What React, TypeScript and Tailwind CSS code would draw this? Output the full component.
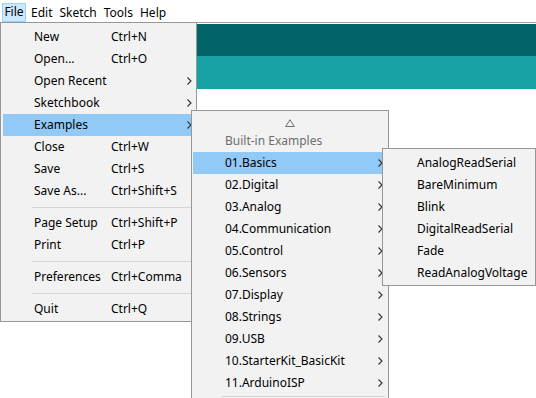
import React from 'react';

const fileItems: (string | [string, string?, boolean?])[] = [
  ['New', 'Ctrl+N'],
  ['Open...', 'Ctrl+O'],
  ['Open Recent', '', true],
  ['Sketchbook', '', true],
  ['Examples', '', true],
  ['Close', 'Ctrl+W'],
  ['Save', 'Ctrl+S'],
  ['Save As...', 'Ctrl+Shift+S'],
  '-',
  ['Page Setup', 'Ctrl+Shift+P'],
  ['Print', 'Ctrl+P'],
  '-',
  ['Preferences', 'Ctrl+Comma'],
  '-',
  ['Quit', 'Ctrl+Q'],
];

const examples = [
  '01.Basics',
  '02.Digital',
  '03.Analog',
  '04.Communication',
  '05.Control',
  '06.Sensors',
  '07.Display',
  '08.Strings',
  '09.USB',
  '10.StarterKit_BasicKit',
  '11.ArduinoISP',
];

const basics = ['AnalogReadSerial', 'BareMinimum', 'Blink', 'DigitalReadSerial', 'Fade', 'ReadAnalogVoltage'];

function Chevron() {
  return (
    <svg width="5" height="8" viewBox="0 0 5 8" className="shrink-0">
      <polyline points="0.5,0.5 4,4 0.5,7.5" fill="none" stroke="#333" strokeWidth="1.1" />
    </svg>
  );
}

export default function App() {
  return (
    <div
      className="relative w-[536px] h-[398px] bg-white overflow-hidden text-[12px] text-black"
      style={{ fontFamily: '"Noto Sans", "Open Sans", sans-serif' }}
    >
      {/* menu bar */}
      <div className="h-[23px] border-b border-[#a0a0a0] flex items-center pl-[2px]">
        <div className="h-[19px] mt-[2px] w-[24px] flex items-center justify-center bg-[#cce8ff] border border-[#99d1ff]">File</div>
        <div className="ml-[5px] mt-[2px] flex gap-[7px] leading-[19px]">
          <span>Edit</span>
          <span>Sketch</span>
          <span>Tools</span>
          <span>Help</span>
        </div>
      </div>
      <div className="h-px" />
      <div className="h-[32px] bg-[#006468]" />
      <div className="h-[33px] bg-[#17a1a5]" />

      {/* File menu */}
      <div className="absolute left-0 top-[22px] w-[197px] h-[300px] bg-[#f2f2f2] border border-[#979797] pt-[3px] px-[2px] flex flex-col">
        {fileItems.map((it, i) =>
          it === '-' ? (
            <div key={i} className="h-[10px] flex items-center pl-[29px] pr-[1px]">
              <div className="h-px w-full bg-[#d5d5d5]" />
            </div>
          ) : (
            <div
              key={i}
              className={`h-[22px] shrink-0 flex items-center pl-[31px] pr-[2px] ${it[0] === 'Examples' ? 'bg-[#91c9f7]' : ''}`}
            >
              <span className="w-[77px]">{it[0]}</span>
              <span className="flex-1">{it[1]}</span>
              {it[2] && <Chevron />}
            </div>
          )
        )}
      </div>

      {/* Examples submenu */}
      <div className="absolute left-[191px] top-[110px] w-[198px] h-[300px] bg-[#f2f2f2] border border-[#979797] pt-[1px] px-[1px] flex flex-col">
        <div className="h-[18px] flex items-end justify-center pb-[3px]">
          <svg width="10" height="8" viewBox="0 0 10 8">
            <polygon points="5,0.7 9.3,7.5 0.7,7.5" fill="none" stroke="#6d6d6d" strokeWidth="1" />
          </svg>
        </div>
        <div className="h-[22px] flex items-center pl-[32px] text-[#6d6d6d]">Built-in Examples</div>
        {examples.map((e, i) => (
          <div
            key={e}
            className={`h-[22px] shrink-0 flex items-center pl-[32px] pr-[4px] ${i === 0 ? 'bg-[#91c9f7]' : ''}`}
          >
            <span className="flex-1">{e}</span>
            <Chevron />
          </div>
        ))}
        <div className="h-[2px]" />
        <div className="ml-[29px] mr-[2px] h-px bg-[#d5d5d5]" />
      </div>

      {/* Basics submenu */}
      <div className="absolute left-[382px] top-[148px] w-[154px] h-[138px] bg-[#f2f2f2] border border-[#979797] pt-[3px] flex flex-col">
        {basics.map((b) => (
          <div key={b} className="h-[22px] shrink-0 flex items-center pl-[34px]">
            {b}
          </div>
        ))}
      </div>
    </div>
  );
}
